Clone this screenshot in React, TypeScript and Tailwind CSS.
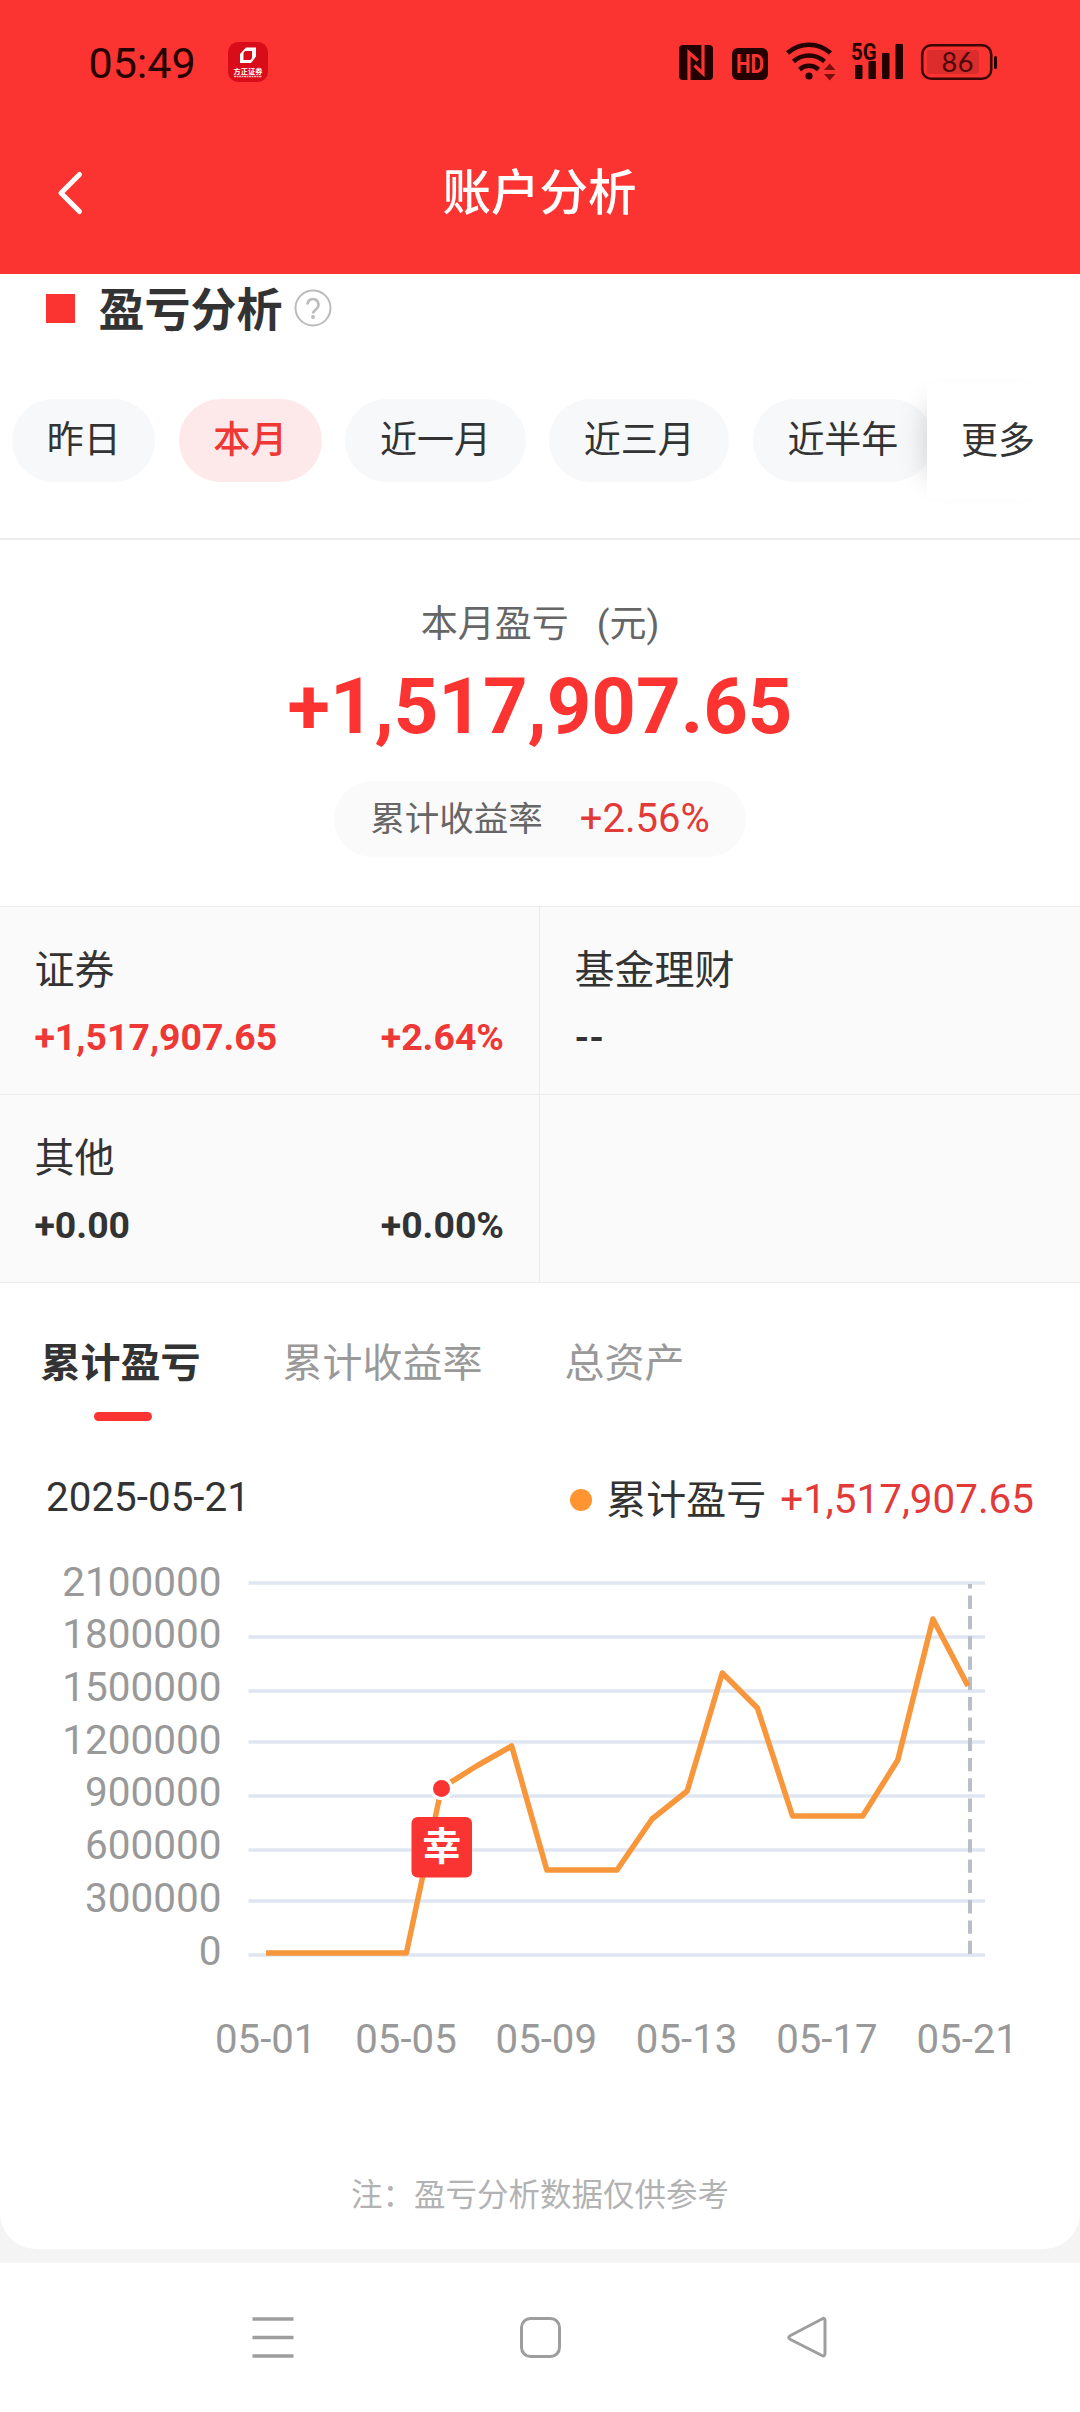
import React, { useState } from 'react';

const RANGES = ['昨日', '本月', '近一月', '近三月', '近半年'];

const TABS = ['累计盈亏', '累计收益率', '总资产'];

const CELLS = [
  { name: '证券', amount: '+1,517,907.65', rate: '+2.64%', up: true },
  { name: '基金理财', amount: '--', rate: '', up: false },
  { name: '其他', amount: '+0.00', rate: '+0.00%', up: false },
  { name: '', amount: '', rate: '', up: false },
];

// y of the label and y of its grid line
const Y_AXIS = [
  { label: '2100000', text: 1596, line: 1583 },
  { label: '1800000', text: 1648, line: 1637 },
  { label: '1500000', text: 1701, line: 1691 },
  { label: '1200000', text: 1754, line: 1742 },
  { label: '900000', text: 1806, line: 1796 },
  { label: '600000', text: 1859, line: 1850 },
  { label: '300000', text: 1912, line: 1901 },
  { label: '0', text: 1965, line: 1955 },
];

const X_AXIS = ['05-01', '05-05', '05-09', '05-13', '05-17', '05-21'];

const SERIES = [
  1953, 1953, 1953, 1953, 1953, 1788, 1766, 1746, 1870, 1870, 1870,
  1819, 1791, 1673, 1708, 1816, 1816, 1816, 1760, 1619, 1686,
];

const StatusBar = () => (
  <div className="flex h-[124px] items-center text-[#250000]">
    <span className="ml-[88.500px] w-[139.500px] pt-[2px] text-[43px] leading-none">05:49</span>
    <svg width="40" height="40" viewBox="0 0 40 40">
      <rect width="40" height="40" rx="10" fill="#d90c1a" />
      <path fillRule="evenodd" fill="#fff" d="M18 5.500h10v9l-5 6.500H12v-9zM17 9l-1.500 2v7h7l1.500-2V9z" />
      <text x="20" y="31.500" fontSize="7.200" fontWeight="700" textAnchor="middle" fill="#fff">方正证券</text>
      <path d="M6 34.500h28" stroke="#fff" strokeOpacity=".7" strokeWidth="1.400" strokeDasharray="2 .5" />
    </svg>

    <svg className="ml-[411px]" width="320" height="50" viewBox="679 37 320 50" fill="#250000">
      {/* NFC */}
      <rect x="679" y="45" width="34" height="35" rx="4" />
      <path d="M689 80V52.500l8.800 8M703 45v28.500l-8.500-8" fill="none" stroke="#fb3432" strokeWidth="3.200" />
      {/* HD */}
      <rect x="732" y="48" width="36" height="32" rx="6" />
      <text x="750" y="73" fontSize="25" fontWeight="700" textAnchor="middle" textLength="28" lengthAdjust="spacingAndGlyphs" fill="#fb3432">HD</text>
      {/* wifi */}
      <g fill="none" stroke="#250000" strokeWidth="4.500">
        <path d="M787.500 53a32 32 0 0 1 43 0" />
        <path d="M793.500 61.500a23 23 0 0 1 31 0" />
        <path d="M799.500 69.500a14 14 0 0 1 19 0" />
      </g>
      <circle cx="809" cy="76" r="3.600" />
      <path d="M824 70l5.700-6.500 5.700 6.500zM824 74l5.700 6.500 5.700-6.500z" fill="#7a0f10" />
      {/* signal */}
      <text x="851" y="59.500" fontSize="24.500" fontWeight="700" textLength="25.500" lengthAdjust="spacingAndGlyphs">5G</text>
      <rect x="855" y="65" width="7.500" height="14" rx="1" />
      <rect x="868.500" y="61" width="7.500" height="18" rx="1" />
      <rect x="882" y="53" width="7.500" height="26" rx="1" />
      <rect x="895.500" y="44" width="7.500" height="35" rx="1" />
      {/* battery */}
      <rect x="922.200" y="45.200" width="69" height="33.600" rx="9" fill="none" stroke="#3d0505" strokeWidth="2.600" />
      <rect x="927" y="50" width="52" height="24" rx="3" fill="#dc2c2c" />
      <rect x="994" y="56" width="3" height="13" rx="1.500" />
      <text x="957.500" y="72" fontSize="27" textAnchor="middle" fill="#4a0808" fontFamily="Lato" textLength="32">86</text>
    </svg>
  </div>
);

const Chart = () => {
  const points = SERIES.map((y, i) => `${266 + i * 35.1},${y}`).join(' ');

  return (
    <svg className="block" width="1080" height="540" viewBox="0 1540 1080 540">
      {Y_AXIS.map((row) => (
        <g key={row.label}>
          <text x="221.500" y={row.text} textAnchor="end" fontSize="40.500" fill="#999">{row.label}</text>
          <path d={`M248.500 ${row.line}H985`} stroke="#e0e6f1" strokeWidth="3.500" />
        </g>
      ))}
      {X_AXIS.map((label, i) => (
        <text key={label} x={265.7 + i * 140.3} y="2053" textAnchor="middle" fontSize="40.200" fill="#999">{label}</text>
      ))}

      <path d="M970 1955V1584" stroke="#b9bec9" strokeWidth="4" strokeDasharray="13.300 7" strokeDashoffset="-1" />
      <polyline points={points} fill="none" stroke="#f7963b" strokeWidth="5.500" strokeLinejoin="round" />

      <circle cx="441.500" cy="1788.500" r="10" fill="#fa3432" stroke="#fff" strokeWidth="3" />
      <rect x="411.500" y="1817" width="60.500" height="60.500" rx="6" fill="#fa3432" />
      <text x="441.700" y="1860" textAnchor="middle" fontSize="39" fontWeight="700" fill="#fff">幸</text>
    </svg>
  );
};

export default function App() {
  const [range, setRange] = useState('本月');
  const [tab, setTab] = useState('累计盈亏');

  return (
    <div className="h-[2412px] w-[1080px] overflow-hidden bg-[#f4f4f4] font-['Roboto','Noto_Sans_CJK_SC',sans-serif] text-[#333]">
      {/* Header */}
      <header className="h-[274px] bg-[#fb3432]">
        <StatusBar />
        <div className="flex h-[138px] items-center">
          <svg className="ml-[55px] w-[30px]" width="30" height="46" viewBox="0 0 30 46">
            <path d="M24.500 4.500L6 23l18.500 18.500" fill="none" stroke="#fff" strokeWidth="5" strokeLinecap="round" strokeLinejoin="round" />
          </svg>
          <h1 className="mr-[86px] flex-1 pt-[3px] text-center text-[48.500px] leading-none font-medium text-white">账户分析</h1>
        </div>
      </header>

      <main className="h-[1975px] rounded-b-[36px] bg-white">
        {/* Section title */}
        <div className="flex h-[68px] items-center pl-[46px]">
          <span className="h-[29px] w-[29px] bg-[#fb3432]" />
          <h2 className="ml-[23.500px] pt-[4px] text-[46px] leading-none font-bold">盈亏分析</h2>
          <svg className="ml-[11.500px]" width="38" height="38" viewBox="0 0 38 38" fill="none" stroke="#bbb" strokeWidth="2">
            <circle cx="19" cy="19" r="17.500" />
            <path d="M13.500 15.500a5.500 5.500 0 1 1 9.300 4c-2.300 2-3.800 3-3.800 5" strokeWidth="2.600" />
            <circle cx="19" cy="28" r="1" />
          </svg>
        </div>

        {/* Range selector */}
        <div className="relative flex h-[196px] gap-[23.300px] overflow-hidden pt-[57px] pl-[12px]">
          {RANGES.map((item) => (
            <button
              key={item}
              onClick={() => setRange(item)}
              className={`h-[83px] shrink-0 rounded-full px-[34.700px] text-[37px] leading-none whitespace-nowrap ${
                range === item ? 'bg-[#fde9ea] font-medium text-[#ef3836]' : 'bg-[#f7f8fa]'
              }`}
            >
              {item}
            </button>
          ))}
          <button className="absolute top-[41px] left-[927px] h-[116px] w-[153px] bg-white pl-[34px] text-left text-[37px] leading-none shadow-[-22px_0_28px_-22px_rgba(0,0,0,0.18)]">
            更多
          </button>
        </div>

        {/* Summary */}
        <section className="flex h-[368px] flex-col items-center border-t-2 border-[#ededed]">
          <div className="mt-[62px] flex h-[44px] items-center text-[37px] leading-none text-[#666]">
            本月盈亏<span className="ml-[28px]">(元)</span>
          </div>
          <div className="mt-[16px] flex h-[90px] items-center text-[77.800px] leading-none font-bold text-[#fb3432]">+1,517,907.65</div>
          <div className="mt-[29px] flex h-[76px] w-[412px] items-center justify-center rounded-full bg-[#fafafa] leading-none">
            <span className="text-[34.500px] text-[#666]">累计收益率</span>
            <span className="ml-[37px] text-[40px] text-[#e23a38]">+2.56%</span>
          </div>
        </section>

        {/* Asset cells */}
        <section className="grid grid-cols-2 border-t border-[#ebebeb] bg-[#fafafa]">
          {CELLS.map((cell, i) => (
            <div key={i} className="h-[188px] border-b border-[#ebebeb] pr-[35px] pl-[34.500px] odd:border-r">
              <div className="mt-[43.500px] h-[40px] text-[40px] leading-[40px]">{cell.name}</div>
              <div className={`mt-[26.500px] flex justify-between text-[37.400px] leading-[40px] font-bold ${cell.up ? 'text-[#ee3836]' : ''}`}>
                <span>{cell.amount}</span>
                <span>{cell.rate}</span>
              </div>
            </div>
          ))}
        </section>

        {/* Chart tabs */}
        <div className="flex h-[178px] gap-[82px] pt-[59px] pl-[40.500px]">
          {TABS.map((item) => (
            <button
              key={item}
              onClick={() => setTab(item)}
              className={`flex h-[81px] flex-col items-center text-[40px] leading-[44px] ${tab === item ? 'font-bold' : 'text-[#999]'}`}
            >
              {item}
              {tab === item && <span className="mt-[26px] ml-[5px] h-[9px] w-[58px] rounded-full bg-[#fa3432]" />}
            </button>
          ))}
        </div>

        <div className="flex h-[79px] items-center pr-[46px] pl-[46px] text-[40.400px] leading-none">
          <span className="pb-[5px]">2025-05-21</span>
          <span className="mb-[2px] ml-auto h-[22px] w-[22px] rounded-full bg-[#ff9430]" />
          <span className="ml-[14px] text-[40px]">累计盈亏</span>
          <span className="ml-[14px] pb-[1px] text-[#e23a38]">+1,517,907.65</span>
        </div>

        <Chart />

        <p className="pt-[94px] text-center text-[31.500px] leading-[44px] text-[#b2b2b2]">注：盈亏分析数据仅供参考</p>
      </main>

      {/* System navigation */}
      <nav className="mt-[14px] flex h-[149px] justify-center gap-[223px] bg-white pt-[52px]">
        <svg width="44" height="44" viewBox="0 0 44 44" fill="none" stroke="#9e9e9e" strokeWidth="3.500">
          <path d="M1.500 4h41M1.500 22.500h41M1.500 41h41" />
        </svg>
        <svg width="44" height="44" viewBox="0 0 44 44" fill="none" stroke="#9e9e9e" strokeWidth="3">
          <rect x="3.500" y="3.500" width="38" height="38" rx="9" />
        </svg>
        <svg width="44" height="44" viewBox="0 0 44 44" fill="none" stroke="#9e9e9e" strokeWidth="3" strokeLinejoin="round">
          <path d="M37 4Q40 2 40 6V38Q40 42 37 40.500L5.500 24.500Q2 22.500 5.500 20.500Z" />
        </svg>
      </nav>
    </div>
  );
}
